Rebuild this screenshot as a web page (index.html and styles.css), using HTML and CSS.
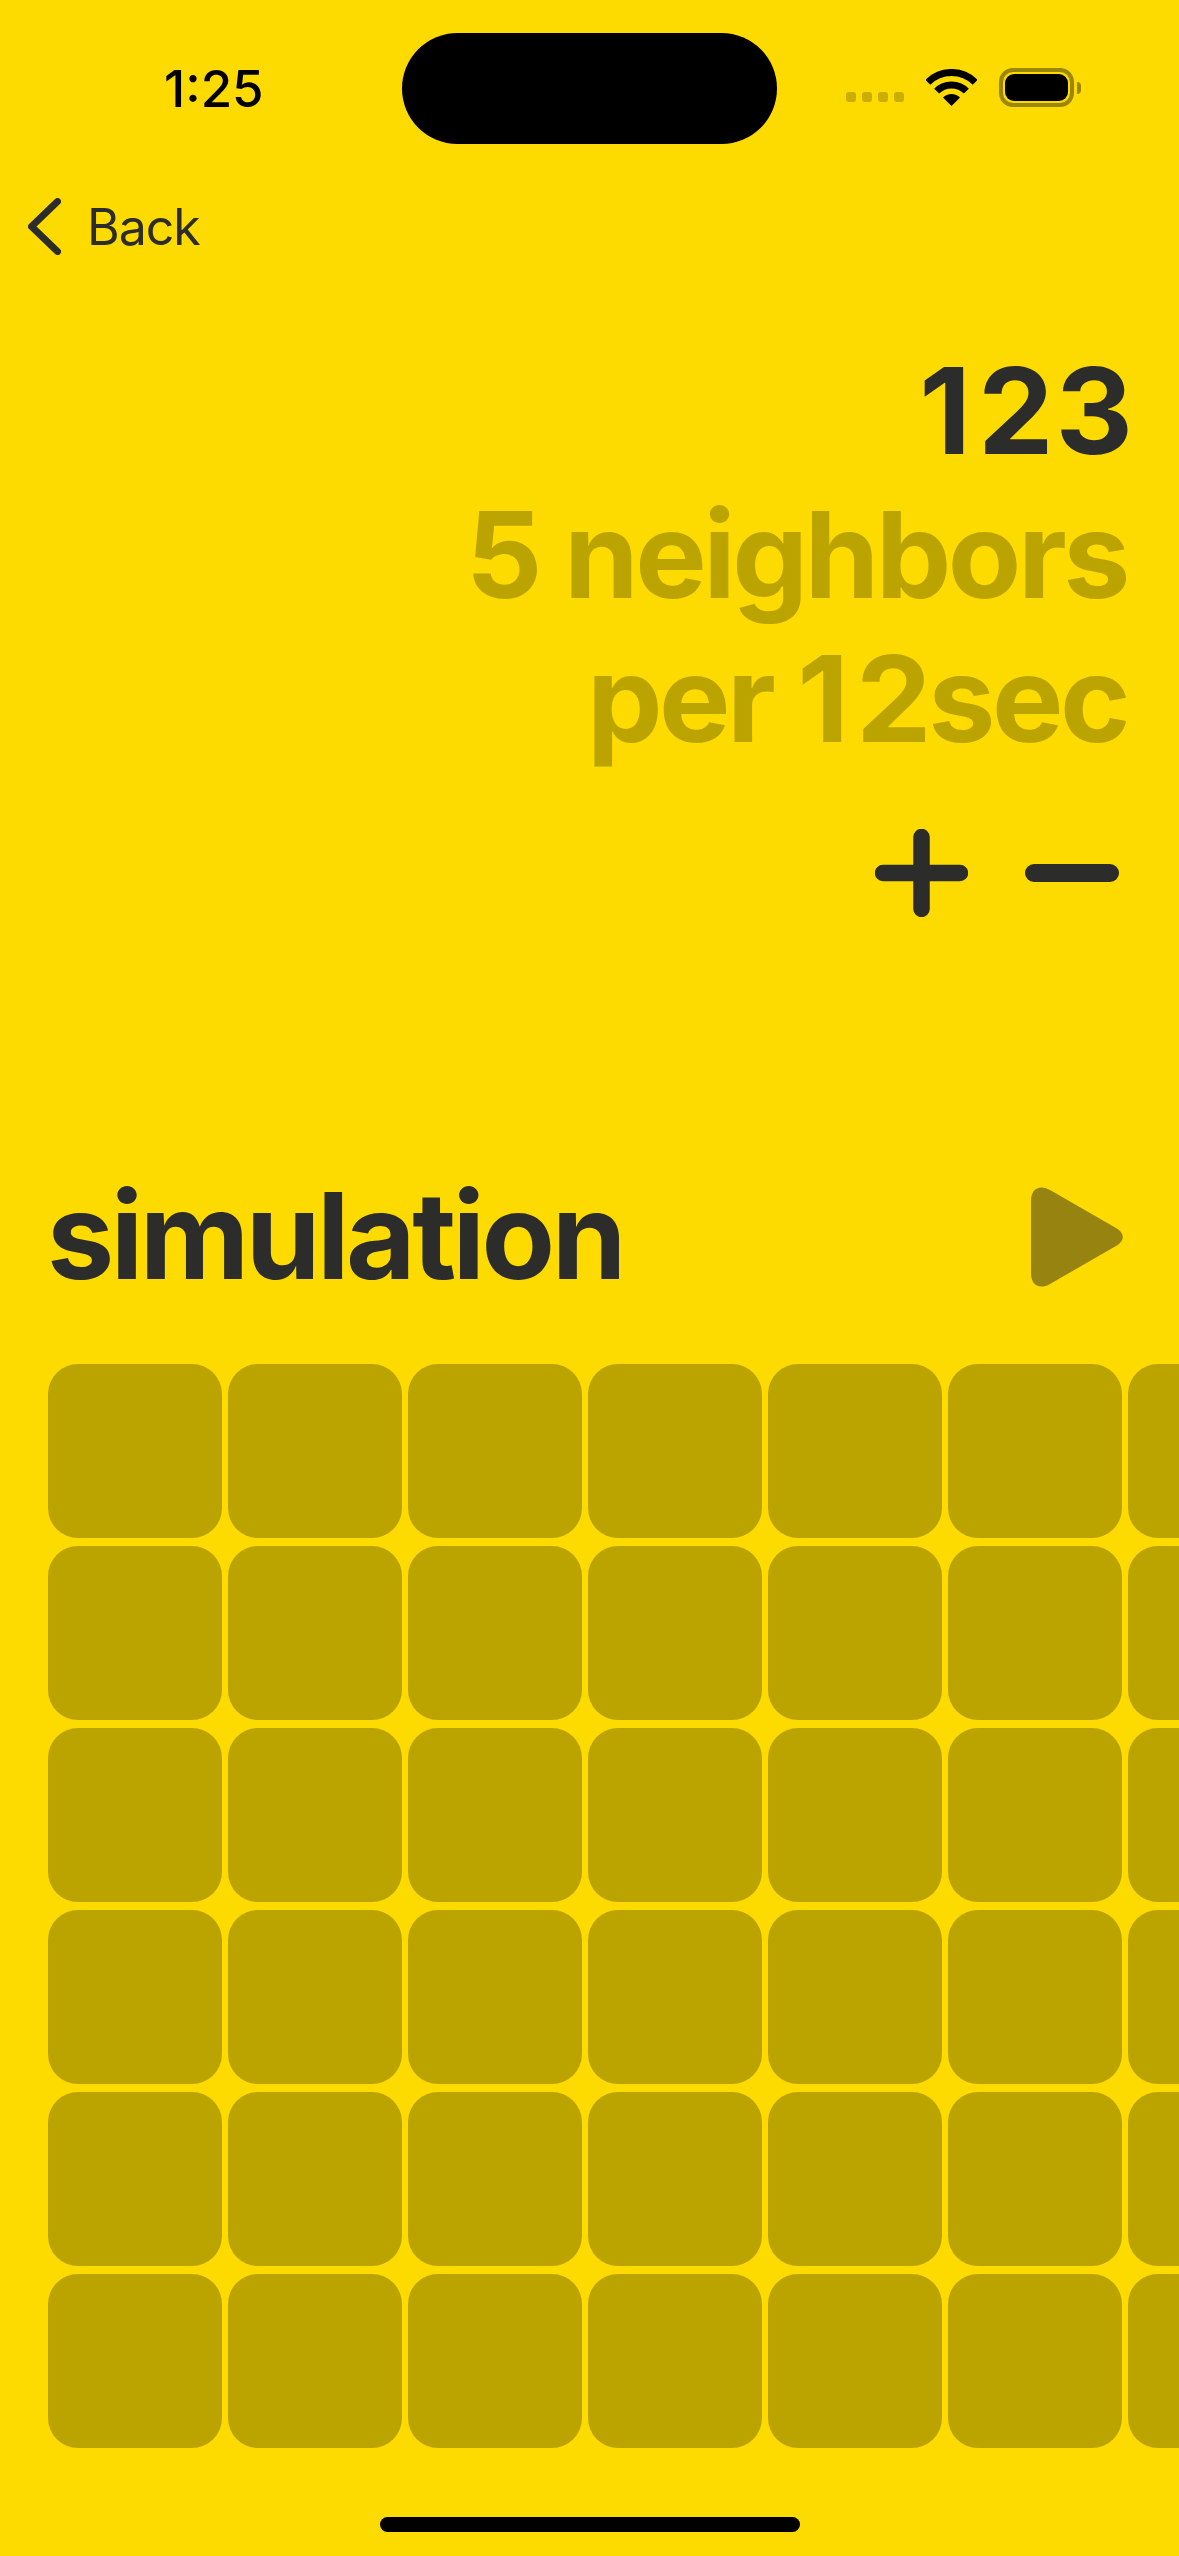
FILE: index.html
```html
<!DOCTYPE html>
<html lang="en">
<head>
  <meta charset="UTF-8">
  <meta name="viewport" content="width=device-width, initial-scale=1.0">
  <title>Simulation</title>
  <link rel="stylesheet" href="styles.css">
</head>
<body>
  <header class="status-bar">
    <div class="time">1:25</div>
    <div class="island"></div>
    <div class="status-icons">
      <div class="signal">
        <span></span><span></span><span></span><span></span>
      </div>
      <svg class="wifi" viewBox="0 0 51 37" width="51" height="37">
        <path d="M1.8 13.3A33.5 33.5 0 0 1 49.2 13.3" fill="none" stroke="#000" stroke-width="7"/>
        <path d="M10.65 22.15A21 21 0 0 1 40.35 22.15" fill="none" stroke="#000" stroke-width="7"/>
        <path d="M25.5 37L17 28.5A12 12 0 0 1 34 28.5Z" fill="#000"/>
      </svg>
      <div class="battery"><div class="battery-level"></div></div>
      <div class="battery-nub"></div>
    </div>
  </header>

  <nav class="back">
    <svg viewBox="0 0 33 57" width="33" height="57">
      <path d="M29.5 3.5L3.5 28.5L29.5 53.5" fill="none" stroke="#2c2c2a" stroke-width="7" stroke-linecap="round" stroke-linejoin="round"/>
    </svg>
    <span>Back</span>
  </nav>

  <section class="counter">
    <div class="count"><span class="one">1</span>23</div>
    <div class="rule">5 neighbors</div>
    <div class="rule">per <span class="one">1</span>2sec</div>
    <div class="controls">
      <svg viewBox="0 0 93 88" width="93" height="88">
        <path d="M8 44H85M46.5 8V80" fill="none" stroke="#2c2c2a" stroke-width="16.5" stroke-linecap="round"/>
      </svg>
      <svg viewBox="0 0 94 88" width="94" height="88">
        <path d="M9 44H85" fill="none" stroke="#2c2c2a" stroke-width="18" stroke-linecap="round"/>
      </svg>
    </div>
  </section>

  <section class="sim-head">
    <h1>simulation</h1>
    <svg viewBox="0 0 92 100" width="92" height="100">
      <path d="M0 14C0 2 8 -3 19 3L85 41C94 46 94 54 85 59L19 97C8 103 0 98 0 86Z" fill="#978310"/>
    </svg>
  </section>

  <div class="grid">
    <div class="cell"></div><div class="cell"></div><div class="cell"></div><div class="cell"></div><div class="cell"></div><div class="cell"></div><div class="cell"></div>
    <div class="cell"></div><div class="cell"></div><div class="cell"></div><div class="cell"></div><div class="cell"></div><div class="cell"></div><div class="cell"></div>
    <div class="cell"></div><div class="cell"></div><div class="cell"></div><div class="cell"></div><div class="cell"></div><div class="cell"></div><div class="cell"></div>
    <div class="cell"></div><div class="cell"></div><div class="cell"></div><div class="cell"></div><div class="cell"></div><div class="cell"></div><div class="cell"></div>
    <div class="cell"></div><div class="cell"></div><div class="cell"></div><div class="cell"></div><div class="cell"></div><div class="cell"></div><div class="cell"></div>
    <div class="cell"></div><div class="cell"></div><div class="cell"></div><div class="cell"></div><div class="cell"></div><div class="cell"></div><div class="cell"></div>
  </div>

  <div class="home-bar"></div>
</body>
</html>
```

FILE: styles.css
```css
* {
  margin: 0;
  padding: 0;
  box-sizing: border-box;
  font-family: 'Inter', 'Liberation Sans', sans-serif;
}

body {
  background: #fdda00;
  color: #2c2c2a;
  width: 1179px;
  height: 2556px;
  overflow: hidden;
}

.status-bar {
  display: flex;
  align-items: center;
  height: 111px;
  margin-top: 33px;
}

.time {
  width: 402px;
  padding-left: 164px;
  font-size: 51px;
  font-weight: 500;
  color: #000;
}

.island {
  width: 375px;
  height: 111px;
  border-radius: 56px;
  background: #000;
}

.status-icons {
  display: flex;
  align-items: center;
  margin-left: 69px;
  margin-top: -2px;
}

.signal {
  display: flex;
  gap: 6px;
  margin-top: 18px;
  margin-right: 22px;
}

.signal span {
  width: 10px;
  height: 10px;
  border-radius: 3px;
  background: #c9ae00;
}

.wifi {
  margin-right: 22px;
}

.battery {
  width: 75px;
  height: 39px;
  border: 4px solid #9b8700;
  border-radius: 14px;
  padding: 2px;
}

.battery-level {
  height: 100%;
  border-radius: 9px;
  background: #000;
}

.battery-nub {
  width: 4px;
  height: 12px;
  margin-left: 3px;
  border-radius: 0 6px 6px 0;
  background: #9b8700;
}

.back {
  display: flex;
  align-items: center;
  gap: 26px;
  height: 57px;
  margin-top: 54px;
  padding-left: 28px;
  font-size: 50px;
  font-weight: 375;
  letter-spacing: -1px;
}

.counter {
  margin-top: 84px;
  padding-right: 52px;
  text-align: right;
  font-size: 120px;
  font-weight: 700;
  line-height: 144px;
  letter-spacing: -3.5px;
}

.count {
  margin-right: -8px;
  letter-spacing: 2px;
}

.rule {
  color: #bca400;
}

.one {
  letter-spacing: 7px;
}

.controls {
  display: flex;
  justify-content: flex-end;
  gap: 57px;
  margin-top: 58px;
  padding-right: 8px;
}

.sim-head {
  display: flex;
  justify-content: space-between;
  align-items: center;
  margin-top: 247px;
  padding: 0 56px 0 47px;
}

.sim-head h1 {
  font-size: 120px;
  font-weight: 700;
  line-height: 144px;
  letter-spacing: -3.5px;
}

.sim-head svg {
  margin-top: 2px;
}

.grid {
  display: grid;
  grid-template-columns: repeat(7, 174px);
  grid-auto-rows: 174px;
  column-gap: 6px;
  row-gap: 8px;
  margin-top: 56px;
  padding-left: 48px;
  overflow: hidden;
}

.cell {
  border-radius: 30px;
  background: #bca400;
}

.home-bar {
  width: 420px;
  height: 15px;
  margin: 69px 0 0 380px;
  border-radius: 8px;
  background: #000;
}
```
